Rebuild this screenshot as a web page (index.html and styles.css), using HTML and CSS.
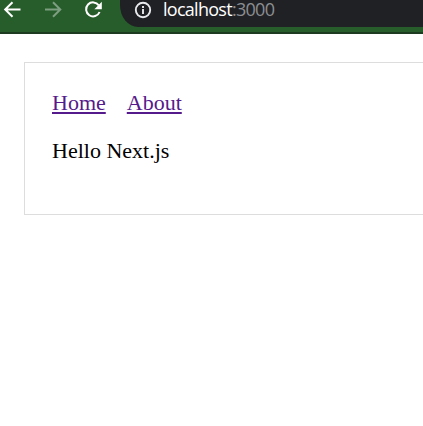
FILE: index.html
```html
<!DOCTYPE html>
<html lang="en">
<head>
<meta charset="utf-8">
<title>Hello Next.js</title>
<link rel="stylesheet" href="styles.css">
</head>
<body>
<header class="toolbar">
  <svg class="nav" width="120" height="28" viewBox="0 0 120 28" fill="none" stroke-width="2">
    <path class="active" d="M20.5 9.5H6M12.5 2.2L5.2 9.5l7.3 7.3"/>
    <path class="disabled" d="M45 9.5h14.5M53 2.2l7.3 7.3-7.3 7.3"/>
    <path class="active" d="M98.8 5.3A7 7 0 1 0 99.6 12"/>
    <path class="tip" d="M101.8 1.8V9.2h-7.4z"/>
  </svg>
  <div class="address">
    <svg class="info" width="18" height="18" viewBox="0 0 18 18" fill="none" stroke="#e8eaed" stroke-width="1.9">
      <circle cx="9" cy="9" r="7.2"/>
      <path d="M9 8v5M9 5v2"/>
    </svg>
    <span class="url">localhost<span class="port">:3000</span></span>
  </div>
</header>
<main class="layout">
  <nav class="links"><a href="#">Home</a><a href="#">About</a></nav>
  <p class="greeting">Hello Next.js</p>
</main>
</body>
</html>
```
FILE: styles.css
```css
* { box-sizing: border-box; }
body {
  margin: 0;
  background: #fff;
  font: 22px/26px "Liberation Serif", serif;
  color: #000;
}
.toolbar {
  display: flex;
  height: 34px;
  background: #275d2b;
  border-bottom: 2px solid #1d3b20;
}
.nav { flex: none; }
.active { stroke: #fff; }
.disabled { stroke: #7d9e80; }
.tip { fill: #fff; }
.address {
  display: flex;
  flex: 1;
  align-items: flex-start;
  height: 27px;
  padding-left: 14px;
  background: #202124;
  border-bottom-left-radius: 18px 22px;
}
.info { flex: none; margin-top: 1px; }
.url {
  margin-left: 11px;
  font: 18px/19px "Open Sans", sans-serif;
  letter-spacing: -0.72px;
  color: #fff;
}
.port { color: #8b8e92; }
.layout {
  height: 153px;
  margin: 28px 0 0 24px;
  padding: 27px;
  border: 1px solid #ddd;
  border-right: 0;
}
.links {
  display: flex;
  gap: 21px;
}
.links a {
  color: #551a8b;
  text-decoration-thickness: 2px;
  text-underline-offset: 2px;
}
.greeting { margin: 22px 0 0; }
```
